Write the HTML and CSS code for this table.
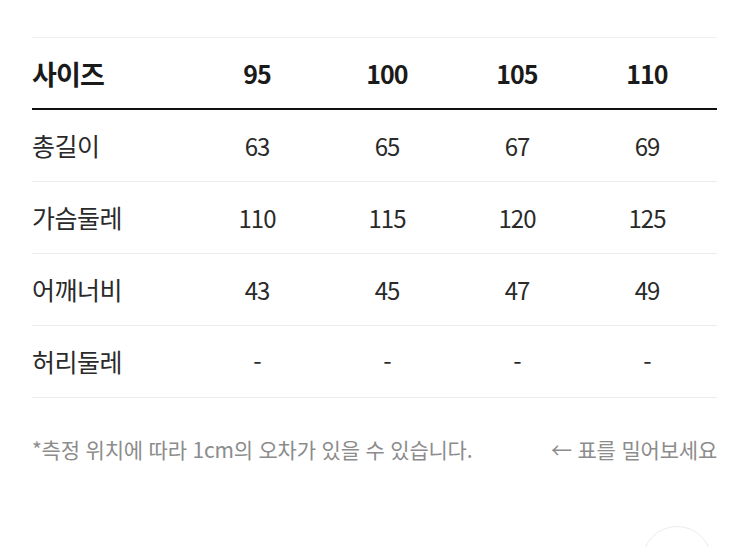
FILE: index.html
```html
<!DOCTYPE html>
<html lang="ko">
<head>
<meta charset="utf-8">
<title>사이즈표</title>
<link rel="stylesheet" href="styles.css">
</head>
<body>
<div class="page">
  <div class="table">
    <div class="row head">
      <div class="cell label">사이즈</div>
      <div class="cell">95</div>
      <div class="cell">100</div>
      <div class="cell">105</div>
      <div class="cell">110</div>
    </div>
    <div class="row">
      <div class="cell label">총길이</div>
      <div class="cell">63</div>
      <div class="cell">65</div>
      <div class="cell">67</div>
      <div class="cell">69</div>
    </div>
    <div class="row">
      <div class="cell label">가슴둘레</div>
      <div class="cell">110</div>
      <div class="cell">115</div>
      <div class="cell">120</div>
      <div class="cell">125</div>
    </div>
    <div class="row">
      <div class="cell label">어깨너비</div>
      <div class="cell">43</div>
      <div class="cell">45</div>
      <div class="cell">47</div>
      <div class="cell">49</div>
    </div>
    <div class="row">
      <div class="cell label">허리둘레</div>
      <div class="cell">-</div>
      <div class="cell">-</div>
      <div class="cell">-</div>
      <div class="cell">-</div>
    </div>
  </div>
  <div class="note">
    <span>*측정 위치에 따라 1cm의 오차가 있을 수 있습니다.</span>
    <span>← 표를 밀어보세요</span>
  </div>
</div>
<div class="fab-clip"><div class="fab"></div></div>
</body>
</html>
```

FILE: styles.css
```css
html, body {
  margin: 0;
  padding: 0;
  background: #ffffff;
}
body {
  width: 750px;
  height: 547px;
  overflow: hidden;
  position: relative;
  font-family: "Noto Sans CJK KR", "Noto Sans", sans-serif;
  color: #2a2a2a;
}
.page {
  padding: 37px 0 0 32px;
  width: 685px;
}
.table {
  border-top: 1px solid #efefef;
}
.row {
  display: grid;
  grid-template-columns: 160px 130px 130px 130px 130px;
  height: 71px;
  border-bottom: 1px solid #ececec;
  align-items: center;
  font-size: 24px;
  font-weight: 400;
}
.row.head {
  height: 70px;
  border-bottom: 2px solid #111111;
  font-size: 25px;
  font-weight: 700;
  color: #1a1a1a;
}
.cell {
  text-align: center;
  line-height: 1;
  letter-spacing: -1px;
}
.cell.label {
  text-align: left;
  font-size: 25px;
  letter-spacing: -0.5px;
}
.row.head .cell.label {
  font-size: 27px;
  letter-spacing: -0.8px;
}
.note {
  display: flex;
  justify-content: space-between;
  margin-top: 37px;
  font-size: 21px;
  color: #8c8c8c;
  letter-spacing: -0.2px;
  line-height: 28px;
}
.fab-clip {
  position: absolute;
  left: 640px;
  top: 524px;
  width: 76px;
  height: 23px;
  overflow: hidden;
}
.fab {
  margin: 2px 0 0 2px;
  width: 70px;
  height: 70px;
  border-radius: 50%;
  border: 1px solid #ececec;
  box-sizing: border-box;
  background: #ffffff;
}
```
